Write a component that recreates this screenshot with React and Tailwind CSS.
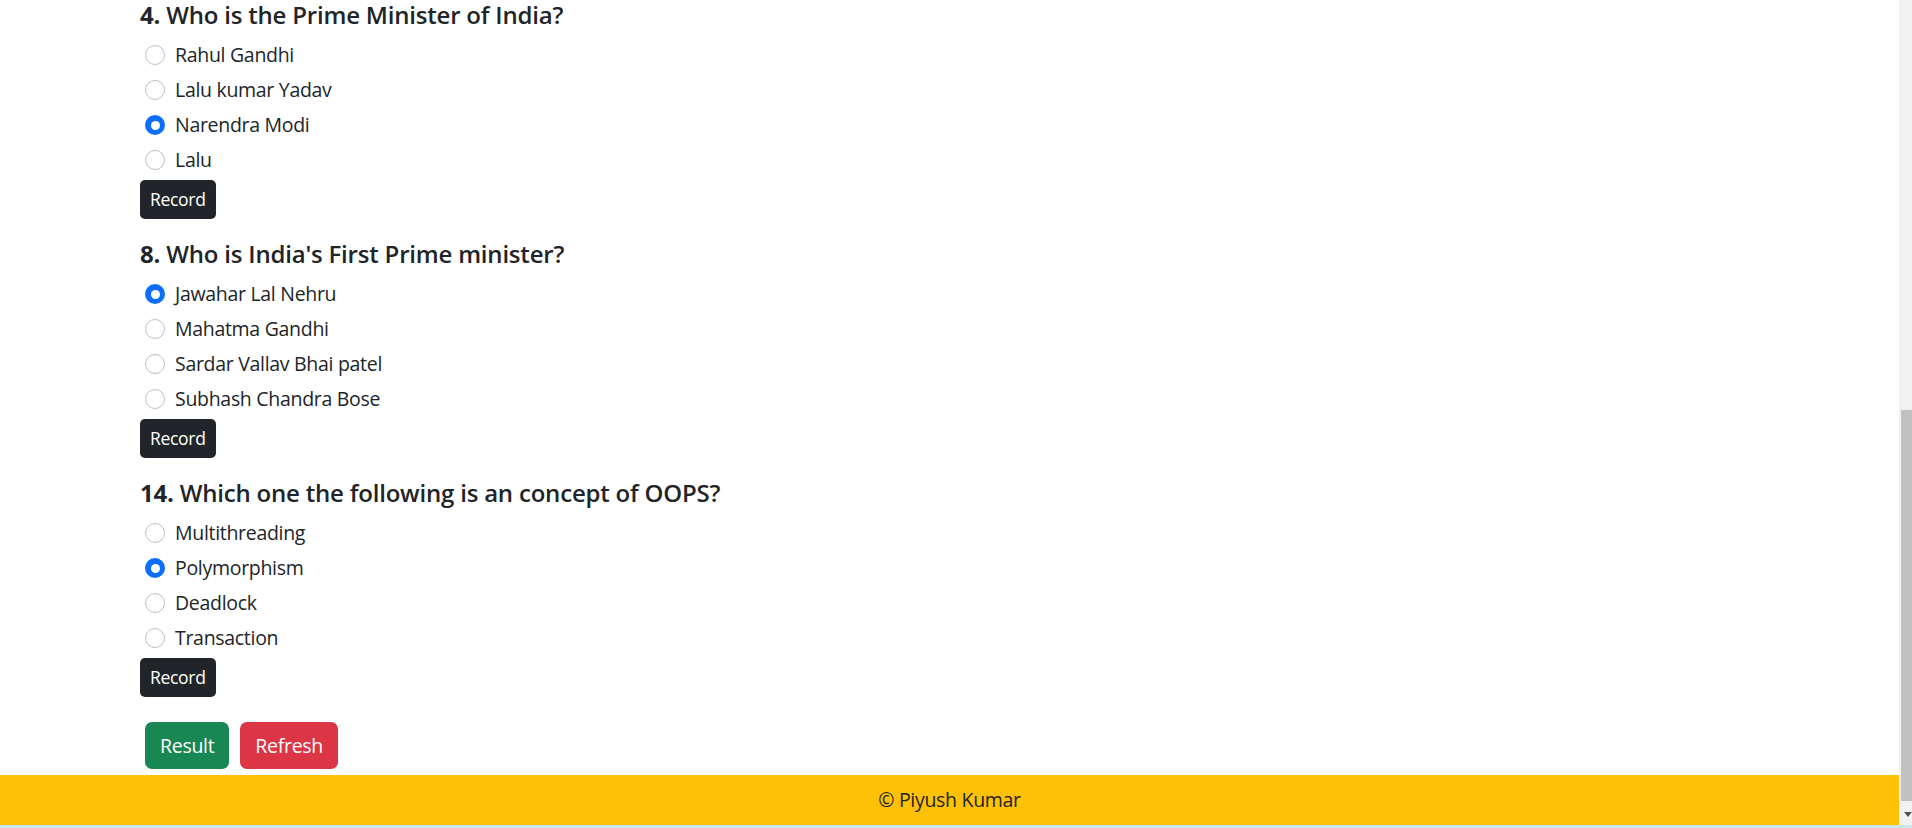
import React, { useState } from 'react';

const questions = [
  {
    id: 4,
    text: 'Who is the Prime Minister of India?',
    options: ['Rahul Gandhi', 'Lalu kumar Yadav', 'Narendra Modi', 'Lalu'],
    picked: 2,
  },
  {
    id: 8,
    text: "Who is India's First Prime minister?",
    options: ['Jawahar Lal Nehru', 'Mahatma Gandhi', 'Sardar Vallav Bhai patel', 'Subhash Chandra Bose'],
    picked: 0,
  },
  {
    id: 14,
    text: 'Which one the following is an concept of OOPS?',
    options: ['Multithreading', 'Polymorphism', 'Deadlock', 'Transaction'],
    picked: 1,
  },
];

const Radio = ({ checked }) =>
  checked ? (
    <span className="mt-[5px] w-5 h-5 shrink-0 rounded-full bg-[#0d6efd] flex items-center justify-center">
      <span className="w-[9px] h-[9px] rounded-full bg-white" />
    </span>
  ) : (
    <span className="mt-[5px] w-5 h-5 shrink-0 rounded-full bg-white border border-[#bfbfbf]" />
  );

const Question = ({ q }) => {
  const [picked, setPicked] = useState(q.picked);
  return (
    <div className="mb-5">
      <h5 className="text-[24px] leading-[30px] mb-[10px] font-semibold tracking-[-0.2px] text-[#212529]">
        <span className="font-bold">{q.id}.</span> {q.text}
      </h5>
      {q.options.map((opt, i) => (
        <label
          key={opt}
          onClick={() => setPicked(i)}
          className="h-[35px] flex items-start pl-[5px] cursor-pointer"
        >
          <Radio checked={picked === i} />
          <span className="ml-[10px] text-[19.5px] leading-[30px] tracking-[-0.3px] text-[#212529]">{opt}</span>
        </label>
      ))}
      <button className="h-[39px] px-[10px] rounded-[5px] bg-[#212529] text-white text-[17.5px] tracking-[-0.3px] leading-none">
        Record
      </button>
    </div>
  );
};

const Scrollbar = () => (
  <div className="w-[13px] bg-[#f1f1f1] flex flex-col">
    <div className="h-[410px]" />
    <div className="h-[391px] ml-[2px] bg-[#c1c1c1]" />
    <div className="flex-1 flex justify-end pt-[11px]">
      <svg width="8" height="5" viewBox="0 0 8 5">
        <path d="M0 0 L8 0 L4 5 Z" fill="#505050" />
      </svg>
    </div>
  </div>
);

export default function App() {
  return (
    <div className="h-[828px] flex flex-col overflow-hidden bg-white font-['Open_Sans',sans-serif]">
      <div className="flex flex-1 min-h-0">
        <div className="flex-1 flex flex-col">
          <main className="flex-1 pl-[140px]">
            {questions.map((q) => (
              <Question key={q.id} q={q} />
            ))}
            <div className="flex gap-[11px] pt-[5px] pl-[5px]">
              <button className="h-[47px] px-[15px] rounded-[7px] bg-[#198754] text-white text-[19.5px] tracking-[-0.3px]">
                Result
              </button>
              <button className="h-[47px] px-[15px] rounded-[7px] bg-[#dc3545] text-white text-[19.5px] tracking-[-0.3px]">
                Refresh
              </button>
            </div>
          </main>
          <footer className="h-[50px] bg-[#ffc107] flex items-center justify-center text-[19.5px] tracking-[-0.3px] text-[#212529]">
            © Piyush Kumar
          </footer>
        </div>
        <Scrollbar />
      </div>
      <div className="h-[3px] bg-[#cde6ee]" />
    </div>
  );
}
